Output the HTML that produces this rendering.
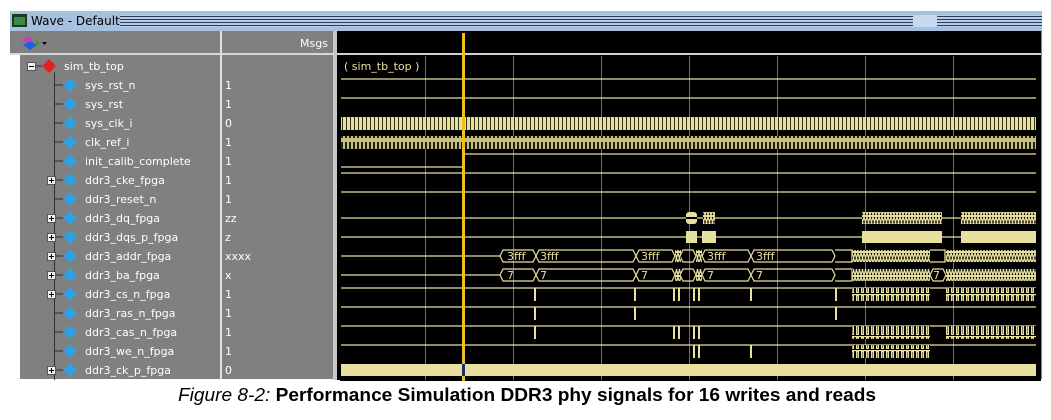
<!DOCTYPE html>
<html><head><meta charset="utf-8"><style>
body{margin:0;width:1051px;height:420px;background:#fff;overflow:hidden;font-family:Tahoma,"DejaVu Sans","Liberation Sans",sans-serif;}
.n{position:absolute;color:#fff;font-size:11px;line-height:13px;}
</style></head><body>
<svg width="1051" height="420" style="position:absolute;left:0;top:0" xmlns="http://www.w3.org/2000/svg">
<defs>
<pattern id="clk1" width="4" height="14" patternUnits="userSpaceOnUse"><rect width="4" height="14" fill="#e8e0a0"/><rect x="2" y="0" width="1" height="14" fill="#303010"/></pattern>
<pattern id="clk2" width="4" height="14" patternUnits="userSpaceOnUse"><rect width="4" height="14" fill="#c8c080"/><rect x="1" y="2" width="2" height="10" fill="#202010"/></pattern>
<pattern id="pulse" width="5" height="14" patternUnits="userSpaceOnUse"><rect width="5" height="14" fill="#000"/><rect x="0" y="0" width="5" height="1.2" fill="#e8e0a0"/><rect x="1" y="0" width="3" height="13" fill="#e8e0a0"/><rect x="2" y="2" width="1" height="10" fill="#808060"/></pattern>
<pattern id="bus" width="6" height="12" patternUnits="userSpaceOnUse"><rect width="6" height="12" fill="#000"/><path d="M0 1 L3 11 M3 1 L0 11 M3 1 L6 11 M6 1 L3 11" stroke="#e8e0a0" stroke-width="1.3"/><path d="M0 0.5H6M0 11.5H6" stroke="#e8e0a0"/></pattern>
<pattern id="ttl" width="4" height="3" patternUnits="userSpaceOnUse"><rect width="4" height="3" fill="#b8cce8"/><rect y="1" width="4" height="1" fill="#2a3a5a"/></pattern>
</defs>
<rect x="10" y="11" width="1032" height="20" fill="#a8c0e0"/>
<rect x="120" y="15" width="922" height="12" fill="url(#ttl)"/>
<rect x="913" y="15" width="24" height="12" fill="#c8d8ee"/>
<rect x="12" y="14" width="15" height="13" fill="#1c3a1c"/><rect x="14" y="17" width="11" height="8" fill="#3a8a4a"/>
<text x="31" y="25" font-size="12" fill="#000" font-family="Tahoma,'DejaVu Sans',sans-serif">Wave - Default</text>
<rect x="10" y="31" width="1032" height="24" fill="#808080"/>
<rect x="20" y="55" width="1022" height="324" fill="#808080"/>
<rect x="220" y="31" width="2" height="348" fill="#e0e0e0"/>
<rect x="333" y="31" width="4" height="350" fill="#c8c8c8"/>
<rect x="10" y="53" width="324" height="2" fill="#d8d8d8"/>
<rect x="337" y="31" width="704" height="350" fill="#000"/>
<rect x="337" y="53" width="704" height="2" fill="#d0d0d0"/>
<g stroke="#707070" stroke-width="1">
<path d="M425.5 56V380M513.5 56V380M601.5 56V380M689.5 56V380M777.5 56V380M865.5 56V380M953.5 56V380"/>
</g>
<g stroke="#e8e0a0" stroke-width="1.3" fill="none">
<path d="M341 79H1036M341 98H1036M341 167H463V154H1036M341 173H1036M341 192H1036"/>
<path d="M341 218H686M697 218H703M715 218H862M942 218H961"/>
<path d="M341 237H686M697 237H702M716 237H862M942 237H961"/>
<path d="M341 256H500M835 250H852V262H835M930 250H945V262H930"/>
<path d="M341 275H500M835 269H852V281H835"/>
<path d="M341 288H1036"/>
<path d="M341 307H1036M341 326H1036M341 345H1036"/>
</g>
<rect x="341" y="117" width="695" height="13" fill="url(#clk1)"/>
<rect x="341" y="136" width="695" height="13" fill="url(#clk2)"/>
<rect x="686" y="212" width="11" height="12" rx="3" fill="#e8e0a0"/><rect x="686" y="217" width="11" height="2" fill="#000"/>
<rect x="703" y="212" width="12" height="12" fill="url(#bus)"/>
<rect x="862" y="212" width="80" height="12" fill="url(#bus)"/>
<rect x="961" y="212" width="75" height="12" fill="url(#bus)"/>
<rect x="686" y="231" width="11" height="12" fill="#e8e0a0"/>
<rect x="702" y="231" width="14" height="12" fill="#e8e0a0"/>
<rect x="862" y="231" width="80" height="12" fill="#e8e0a0"/>
<rect x="961" y="231" width="75" height="12" fill="#e8e0a0"/>
<g stroke="#e8e0a0" stroke-width="1.2" fill="none">
<path d="M500 256L503 250H533L536 256L533 262H503Z M536 256L539 250H633L636 256L633 262H539Z M636 256L639 250H672L675 256L672 262H639Z M680 256L683 250H693L696 256L693 262H683Z M702 256L705 250H748L751 256L748 262H705Z M751 256L754 250H832L835 256L832 262H754Z"/>
<path d="M500 275L503 269H533L536 275L533 281H503Z M536 275L539 269H633L636 275L633 281H539Z M636 275L639 269H672L675 275L672 281H639Z M680 275L683 269H693L696 275L693 281H683Z M702 275L705 269H748L751 275L748 281H705Z M751 275L754 269H832L835 275L832 281H754Z M930 275L933 269H943L946 275L943 281H933Z"/>
</g>
<rect x="675" y="250" width="6" height="12" fill="url(#bus)"/><rect x="696" y="250" width="6" height="12" fill="url(#bus)"/>
<rect x="675" y="269" width="6" height="12" fill="url(#bus)"/><rect x="696" y="269" width="6" height="12" fill="url(#bus)"/>
<rect x="852" y="250" width="78" height="12" fill="url(#bus)"/><rect x="946" y="250" width="90" height="12" fill="url(#bus)"/>
<rect x="852" y="269" width="78" height="12" fill="url(#bus)"/><rect x="946" y="269" width="90" height="12" fill="url(#bus)"/>
<g font-family="Tahoma,'DejaVu Sans',sans-serif" font-size="11" fill="#e8e0a0">
<text x="507" y="260">3fff</text><text x="540" y="260">3fff</text><text x="641" y="260">3fff</text><text x="707" y="260">3fff</text><text x="756" y="260">3fff</text>
<text x="507" y="279">7</text><text x="540" y="279">7</text><text x="641" y="279">7</text><text x="707" y="279">7</text><text x="756" y="279">7</text><text x="933" y="279">7</text>
<text x="344" y="70">( sim_tb_top )</text>
</g>
<g fill="#e8e0a0">
<rect x="534" y="288" width="2" height="13"/><rect x="634" y="288" width="2" height="13"/><rect x="673" y="288" width="2" height="13"/><rect x="678" y="288" width="2" height="13"/><rect x="693" y="288" width="2" height="13"/><rect x="698" y="288" width="2" height="13"/><rect x="750" y="288" width="2" height="13"/><rect x="835" y="288" width="2" height="13"/>
<rect x="534" y="307" width="2" height="13"/><rect x="634" y="307" width="2" height="13"/><rect x="835" y="307" width="2" height="13"/>
<rect x="534" y="326" width="2" height="13"/><rect x="673" y="326" width="2" height="13"/><rect x="678" y="326" width="2" height="13"/><rect x="693" y="326" width="2" height="13"/><rect x="698" y="326" width="2" height="13"/>
<rect x="693" y="345" width="2" height="13"/><rect x="698" y="345" width="2" height="13"/><rect x="750" y="345" width="2" height="13"/>
<rect x="341" y="364" width="695" height="12"/>
</g>
<rect x="852" y="288" width="78" height="13" fill="url(#pulse)"/><rect x="946" y="288" width="90" height="13" fill="url(#pulse)"/>
<rect x="852" y="326" width="78" height="13" fill="url(#pulse)"/><rect x="946" y="326" width="90" height="13" fill="url(#pulse)"/>
<rect x="852" y="345" width="78" height="13" fill="url(#pulse)"/>
<rect x="462" y="33" width="3" height="348" fill="#f0c020"/>
<rect x="462" y="364" width="3" height="12" fill="#203060"/>
<g stroke="#303030" stroke-width="1">
<path d="M54.5 72V380M55 85H64M55 104H64M55 123H64M55 142H64M55 161H64M55 199H64M55 313H64M55 332H64M55 351H64"/>
<path d="M55 180H64M55 218H64M55 237H64M55 256H64M55 275H64M55 294H64M55 370H64"/>
</g>
<g fill="#f0f0f0" stroke="#404040" stroke-width="0.8">
<rect x="27.5" y="62.5" width="8" height="8"/>
<rect x="47.5" y="176.5" width="8" height="8"/><rect x="47.5" y="214.5" width="8" height="8"/><rect x="47.5" y="233.5" width="8" height="8"/><rect x="47.5" y="252.5" width="8" height="8"/><rect x="47.5" y="271.5" width="8" height="8"/><rect x="47.5" y="290.5" width="8" height="8"/><rect x="47.5" y="366.5" width="8" height="8"/>
</g>
<g stroke="#000" stroke-width="1">
<path d="M29 66.5H34"/>
<path d="M49 180.5H54M51.5 178V183M49 218.5H54M51.5 216V221M49 237.5H54M51.5 235V240M49 256.5H54M51.5 254V259M49 275.5H54M51.5 273V278M49 294.5H54M51.5 292V297M49 370.5H54M51.5 368V373"/>
</g>
<path d="M36 66H42" stroke="#303030"/>
<path d="M49 59L56 66L49 73L42 66Z" fill="#e02020"/>
<g fill="#30a0e0">
<path id="d" d="M70 78L77 85L70 92L63 85Z"/>
<use href="#d" y="19"/><use href="#d" y="38"/><use href="#d" y="57"/><use href="#d" y="76"/><use href="#d" y="95"/><use href="#d" y="114"/><use href="#d" y="133"/><use href="#d" y="152"/><use href="#d" y="171"/><use href="#d" y="190"/><use href="#d" y="209"/><use href="#d" y="228"/><use href="#d" y="247"/><use href="#d" y="266"/><use href="#d" y="285"/>
</g>
<path d="M28 36L34 40L28 44L22 40Z" fill="#c040c0"/><path d="M30 41L37 45L30 50L23 45Z" fill="#2060e0"/><path d="M36 40L40 43L36 46Z" fill="#30a030"/>
<path d="M42 42H47L44.5 45Z" fill="#000"/>
<rect x="10" y="380" width="330" height="3" fill="#fff"/>
<text x="178" y="401" font-family="'Liberation Sans',Arial,sans-serif" font-size="18.5" fill="#000" textLength="698" lengthAdjust="spacingAndGlyphs"><tspan font-style="italic">Figure 8-2:</tspan><tspan font-weight="bold"> Performance Simulation DDR3 phy signals for 16 writes and reads</tspan></text>
</svg>
<div class="n" style="left:300px;top:37px;color:#fff">Msgs</div>
<div class="n" style="left:64px;top:60px">sim_tb_top</div>
<div class="n" style="left:85px;top:79px">sys_rst_n</div>
<div class="n" style="left:85px;top:98px">sys_rst</div>
<div class="n" style="left:85px;top:117px">sys_clk_i</div>
<div class="n" style="left:85px;top:136px">clk_ref_i</div>
<div class="n" style="left:85px;top:155px">init_calib_complete</div>
<div class="n" style="left:85px;top:174px">ddr3_cke_fpga</div>
<div class="n" style="left:85px;top:193px">ddr3_reset_n</div>
<div class="n" style="left:85px;top:212px">ddr3_dq_fpga</div>
<div class="n" style="left:85px;top:231px">ddr3_dqs_p_fpga</div>
<div class="n" style="left:85px;top:250px">ddr3_addr_fpga</div>
<div class="n" style="left:85px;top:269px">ddr3_ba_fpga</div>
<div class="n" style="left:85px;top:288px">ddr3_cs_n_fpga</div>
<div class="n" style="left:85px;top:307px">ddr3_ras_n_fpga</div>
<div class="n" style="left:85px;top:326px">ddr3_cas_n_fpga</div>
<div class="n" style="left:85px;top:345px">ddr3_we_n_fpga</div>
<div class="n" style="left:85px;top:364px">ddr3_ck_p_fpga</div>
<div class="n" style="left:225px;top:79px">1</div>
<div class="n" style="left:225px;top:98px">1</div>
<div class="n" style="left:225px;top:117px">0</div>
<div class="n" style="left:225px;top:136px">1</div>
<div class="n" style="left:225px;top:155px">1</div>
<div class="n" style="left:225px;top:174px">1</div>
<div class="n" style="left:225px;top:193px">1</div>
<div class="n" style="left:225px;top:212px">zz</div>
<div class="n" style="left:225px;top:231px">z</div>
<div class="n" style="left:225px;top:250px">xxxx</div>
<div class="n" style="left:225px;top:269px">x</div>
<div class="n" style="left:225px;top:288px">1</div>
<div class="n" style="left:225px;top:307px">1</div>
<div class="n" style="left:225px;top:326px">1</div>
<div class="n" style="left:225px;top:345px">1</div>
<div class="n" style="left:225px;top:364px">0</div>
</body></html>
